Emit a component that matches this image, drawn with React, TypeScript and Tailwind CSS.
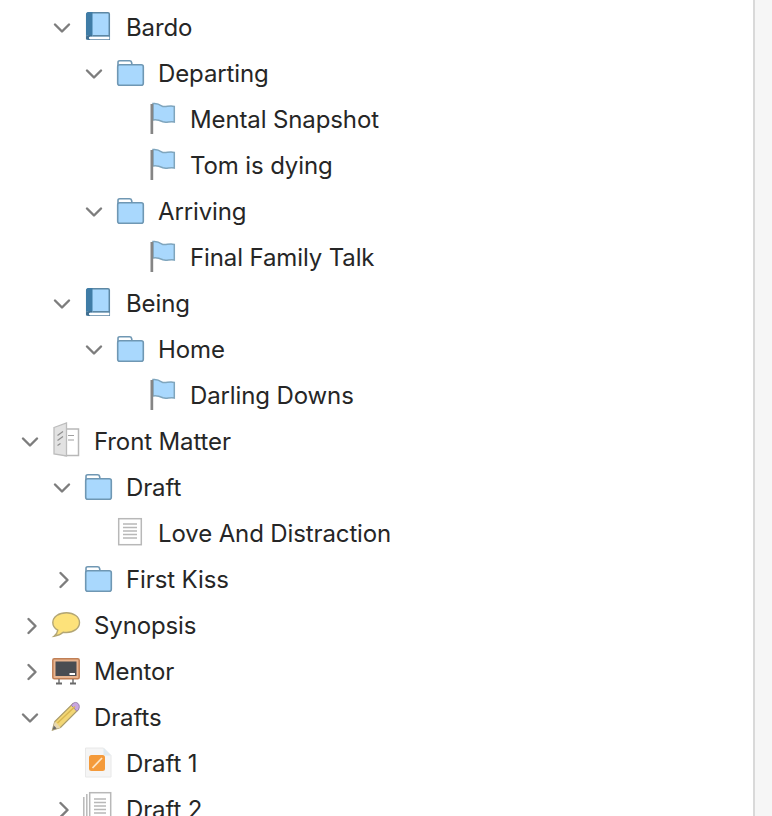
import { ChevronDown, ChevronRight } from 'lucide-react';
import type { ReactNode } from 'react';

type IconKind = 'book' | 'folder' | 'flag' | 'frontmatter' | 'page' | 'bubble' | 'board' | 'pencil' | 'note' | 'stack';

type Item = {
  label: string;
  level: 0 | 1 | 2 | 3;
  icon: IconKind;
  toggle?: 'open' | 'closed';
};

const items: Item[] = [
  { label: 'Bardo', level: 1, icon: 'book', toggle: 'open' },
  { label: 'Departing', level: 2, icon: 'folder', toggle: 'open' },
  { label: 'Mental Snapshot', level: 3, icon: 'flag' },
  { label: 'Tom is dying', level: 3, icon: 'flag' },
  { label: 'Arriving', level: 2, icon: 'folder', toggle: 'open' },
  { label: 'Final Family Talk', level: 3, icon: 'flag' },
  { label: 'Being', level: 1, icon: 'book', toggle: 'open' },
  { label: 'Home', level: 2, icon: 'folder', toggle: 'open' },
  { label: 'Darling Downs', level: 3, icon: 'flag' },
  { label: 'Front Matter', level: 0, icon: 'frontmatter', toggle: 'open' },
  { label: 'Draft', level: 1, icon: 'folder', toggle: 'open' },
  { label: 'Love And Distraction', level: 2, icon: 'page' },
  { label: 'First Kiss', level: 1, icon: 'folder', toggle: 'closed' },
  { label: 'Synopsis', level: 0, icon: 'bubble', toggle: 'closed' },
  { label: 'Mentor', level: 0, icon: 'board', toggle: 'closed' },
  { label: 'Drafts', level: 0, icon: 'pencil', toggle: 'open' },
  { label: 'Draft 1', level: 1, icon: 'note' },
  { label: 'Draft 2', level: 1, icon: 'stack', toggle: 'closed' },
];

const indent = ['pl-[18px]', 'pl-[50px]', 'pl-[82px]', 'pl-[114px]'];

// icons are drawn on a 28 box centred on the row; some spill over it like the originals do
function Svg({ children }: { children: ReactNode }) {
  return (
    <svg viewBox="0 0 28 28" className="h-7 w-7 shrink-0 overflow-visible" fill="none">
      {children}
    </svg>
  );
}

function TreeIcon({ kind }: { kind: IconKind }) {
  switch (kind) {
    case 'book':
      return (
        <Svg>
          <path d="M3.7 .5C3.7-.6 4.5-1.3 5.5-1.3H25A1.3 1.3 0 0 1 26.3 0V24.7H3.7Z" fill="#a9d8fd" stroke="#5d87a3" strokeWidth="1.5" />
          <path d="M3 .5C3-.9 4-2 5.400-2H9.500V21H3Z" fill="#3f7ca6" />
          <path d="M3 24c0-2 1.300-3 3-3H9.500v1.800H7c-1.500 0-1.500 2.400 0 2.400h20V26H6c-1.800 0-3-.8-3-2Z" fill="#3f6f92" />
          <path d="M9.500 21H27v1.800H9.500Z" fill="#5d87a3" />
          <path d="M7 22.800H26.300v2.400H7c-1.500 0-1.500-2.400 0-2.400Z" fill="#fff" />
        </Svg>
      );
    case 'folder':
      return (
        <Svg>
          <path d="M3 6V2.500C3 1.300 3.700.7 4.800.7h9.700c1.200 0 1.900.6 2.100 1.800L17 5" stroke="#6f97b3" strokeWidth="1.600" />
          <rect x="2.700" y="4.700" width="25.600" height="20.600" rx="2" fill="#a9d8fd" stroke="#6f97b3" strokeWidth="1.600" />
        </Svg>
      );
    case 'flag':
      return (
        <Svg>
          <path d="M6 -2.500C9.500-3 12-2 14.500-.2 17.500 1.900 22-1 27.300.4V16C23 14.800 19.500 17.300 16 15.800 12.500 14.200 9.500 12.800 6 14Z" fill="#a9d8fd" stroke="#7fa5bd" strokeWidth="1.500" />
          <rect x="3.500" y="-2" width="2.700" height="30" fill="#858585" />
        </Svg>
      );
    case 'frontmatter':
      return (
        <Svg>
          <rect x="14" y="1" width="13.500" height="26.500" fill="#fff" stroke="#b8b8b8" strokeWidth="1.500" />
          <path d="M3 -.5 15.500 -5V28L3 26Z" fill="#e2e2e2" stroke="#bcbcbc" strokeWidth="1.300" />
          <path d="M6.500 7.500 12 3.500M6.500 12.500 12 8.500M6.500 17.500 9.500 15.500" stroke="#8f8f8f" strokeWidth="1.200" />
          <path d="M17 7.500h6M17 12h6" stroke="#a0a0a0" strokeWidth="1.200" />
        </Svg>
      );
    case 'page':
      return (
        <Svg>
          <rect x="3.700" y="-1.300" width="22.600" height="26" fill="#fff" stroke="#b8b8b8" strokeWidth="1.500" />
          <path d="M8 4h14M8 7.500h14M8 11h14M8 14.500h14M8 18h14" stroke="#b8b8b8" strokeWidth="1.300" />
        </Svg>
      );
    case 'bubble':
      return (
        <Svg>
          <path d="M15.500 .7C7.800.7 1.800 4.800 1.800 10.500c0 3.300 2 6 5 7.700-.3 2.300-1.500 4.300-3.800 6 3.800-.4 7-1.800 9.200-3.900 1 .2 2.100.2 3.300.2 7.300 0 13-4.300 13-10S22.800.7 15.500.7Z" fill="#fde27a" stroke="#b3a675" strokeWidth="1.400" />
        </Svg>
      );
    case 'board':
      return (
        <Svg>
          <rect x="1.800" y=".8" width="26.400" height="20" rx="1.500" fill="#e8b48f" stroke="#c07f55" strokeWidth="1.500" />
          <rect x="4.500" y="3.500" width="21" height="14.500" fill="#4a4d52" />
          <rect x="18.500" y="15" width="5.500" height="2" fill="#fff" />
          <path d="M8 21v4M22 21v4" stroke="#6a6a6a" strokeWidth="1.400" />
          <path d="M5 25.500h6M19 25.500h6" stroke="#6a6a6a" strokeWidth="2" />
        </Svg>
      );
    case 'pencil':
      return (
        <Svg>
          <path d="M1.500 26 3.800 17.500 22 -.5 27.500 5.500 9.500 23.500Z" fill="#f2d675" stroke="#a89a6a" strokeWidth="1.200" />
          <path d="M22 -.5C23.500-1.900 25.500-1.900 27-.5 28.500 1 28.700 3.500 27.500 5.500L25.800 7.200 20.300 1.200Z" fill="#c8a6e0" stroke="#9a82ab" strokeWidth="1" />
          <path d="M1.500 26 3.800 17.500 9.500 23.500Z" fill="#e8d8b0" />
          <path d="M1.500 26 2.800 21.500 5.800 24.500Z" fill="#6a6a6a" />
          <path d="M6.500 19 24 2.500" stroke="#d9b64f" strokeWidth="1.400" />
        </Svg>
      );
    case 'note':
      return (
        <Svg>
          <path d="M2.500-2H20.500L28 5.500V27H2.500Z" fill="#f5f5f5" stroke="#e8e8e8" strokeWidth="1" />
          <path d="M20.500-2V5.500H28Z" fill="#dfeaf0" />
          <rect x="6" y="5" width="16" height="16" rx="2.500" fill="#f49a3a" />
          <path d="M9.500 18 19 8" stroke="#fde6c8" strokeWidth="1.700" />
        </Svg>
      );
    case 'stack':
      return (
        <Svg>
          <path d="M.8 1V28M3.800-2V28" stroke="#b8b8b8" strokeWidth="1.500" />
          <rect x="6.700" y="-3.300" width="21" height="32" fill="#fff" stroke="#b8b8b8" strokeWidth="1.500" />
          <path d="M11 3h12M11 6.500h12M11 10h12M11 13.500h12M11 17h12" stroke="#b8b8b8" strokeWidth="1.300" />
        </Svg>
      );
  }
}

function TreeRow({ item }: { item: Item }) {
  return (
    <div className={`flex h-[46px] shrink-0 items-center ${indent[item.level]}`}>
      <span className="flex w-6 shrink-0 items-center justify-center text-[#7d7d7d]">
        {item.toggle === 'open' && <ChevronDown size={28} strokeWidth={2.1} className="shrink-0" />}
        {item.toggle === 'closed' && <ChevronRight size={28} strokeWidth={2.1} className="shrink-0 translate-x-0.5" />}
      </span>
      <span className="ml-[9px] flex w-7 shrink-0 justify-center">
        <TreeIcon kind={item.icon} />
      </span>
      <span className="ml-[15px] whitespace-nowrap text-[24px] leading-none font-[415] tracking-[-0.12px] text-[#262626]">
        {item.label}
      </span>
    </div>
  );
}

export default function App() {
  return (
    <div className="flex h-[816px] w-[772px] overflow-hidden bg-white font-['Inter','Liberation_Sans',sans-serif]">
      <div className="flex min-w-0 flex-1 flex-col pt-[5px]">
        {items.map((item) => (
          <TreeRow key={item.label} item={item} />
        ))}
      </div>
      <div className="w-[19px] shrink-0 border-l-[2px] border-[#d9d9d9] bg-[#f6f6f6]" />
    </div>
  );
}
